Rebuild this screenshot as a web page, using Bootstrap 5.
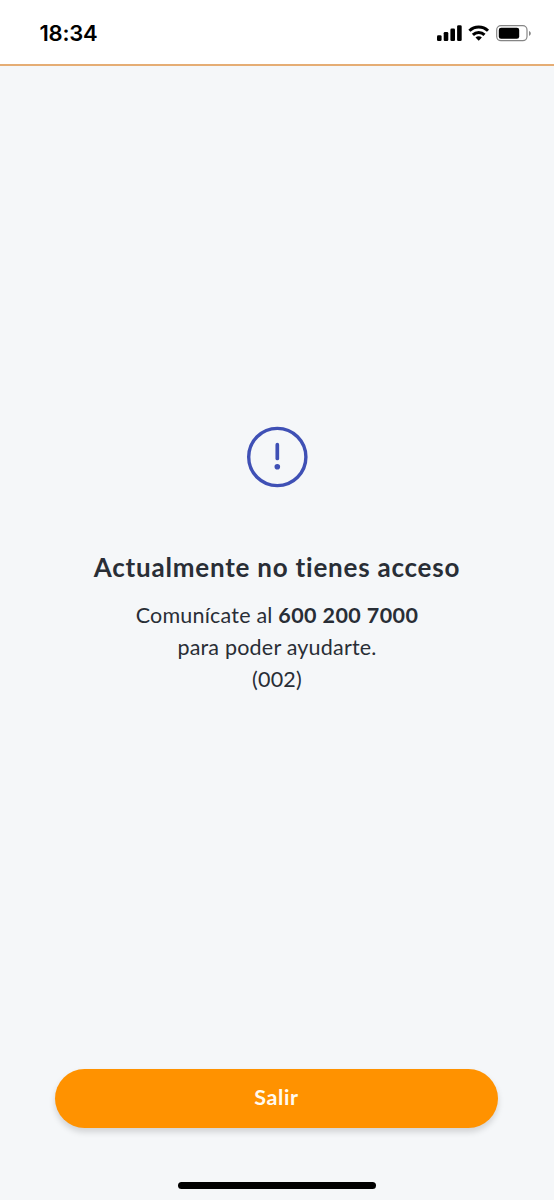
<!DOCTYPE html>
<html lang="es">
<head>
<meta charset="utf-8">
<meta name="viewport" content="width=device-width, initial-scale=1">
<title>Sin acceso</title>
<link href="https://cdn.jsdelivr.net/npm/bootstrap@5.3.0/dist/css/bootstrap.min.css" rel="stylesheet">
<style>
  body { background: #f5f7f9; color: #292e36; font-family: Lato, "Noto Sans", sans-serif; }
  .status-bar { height: 66px; border-bottom: 2px solid #e5ad74; padding-left: 39.5px; padding-right: 22px; }
  .clock { font: 600 22px/30px Inter, sans-serif; color: #000; margin-top: 18px; letter-spacing: -.2px; }
  .status-icons { margin-top: 20px; }
  .alert-icon { margin-top: 357px; }
  .headline { font-size: 26px; font-weight: 700; line-height: 36px; margin: 58px 0 14px; letter-spacing: .78px; }
  .copy { font-size: 21.5px; line-height: 32px; }
  .copy span, .copy strong { white-space: pre; }
  .l1 { letter-spacing: .2px; }
  .phone { letter-spacing: .4px; }
  .l2 { letter-spacing: .2px; }
  .l3 { letter-spacing: .2px; }
  .actions { padding: 0 56px 11px 55px; }
  .btn-exit { --bs-btn-bg: #ff9200; --bs-btn-color: #fffaf0; --bs-btn-hover-bg: #ef8800; --bs-btn-hover-color: #fff;
    height: 59px; font-size: 21.5px; font-weight: 700; border: 0; letter-spacing: .6px; box-shadow: 0 4px 6px rgba(0,0,0,.15); padding: 0 0 2px; }
  .home-bar { width: 198px; height: 7px; background: #000; margin: 54px auto 0; }
</style>
</head>
<body>
<div class="vh-100 d-flex flex-column overflow-hidden">
  <header class="status-bar bg-white d-flex justify-content-between align-items-start flex-shrink-0">
    <div class="clock">18:34</div>
    <svg class="status-icons" width="96" height="26" viewBox="436 20 96 26" aria-hidden="true">
      <rect x="437" y="35.2" width="4.6" height="5.8" rx="1.3"/>
      <rect x="443.7" y="32" width="4.6" height="9" rx="1.3"/>
      <rect x="450.4" y="28.6" width="4.6" height="12.4" rx="1.3"/>
      <rect x="457.1" y="25.2" width="4.6" height="15.8" rx="1.3"/>
      <g fill="none" stroke="#000" stroke-width="3">
        <path d="M469.4 30.7a13.3 13.3 0 0 1 18.6 0"/>
        <path d="M472.9 34.9a8.2 8.2 0 0 1 11.6 0"/>
      </g>
      <path d="M475.5 37.5a4.6 4.6 0 0 1 6.4 0l-3.2 3.3z"/>
      <rect x="496.7" y="25.7" width="30.3" height="15" rx="4.2" fill="none" stroke="#858585" stroke-width="1.2"/>
      <rect x="498.8" y="27.7" width="20.4" height="11" rx="2.3"/>
      <path d="M529 31c2.4.8 2.4 4 0 4.8z" fill="#858585"/>
    </svg>
  </header>
  <main class="flex-grow-1 d-flex flex-column align-items-center text-center">
    <svg class="alert-icon flex-shrink-0" width="68" height="68" viewBox="0 0 68 68" fill="none" stroke="#3f50b5" aria-hidden="true">
      <circle cx="34.3" cy="34" r="28.6" stroke-width="3.4"/>
      <path d="M34.3 21.7v13.8" stroke-width="3.7" stroke-linecap="round"/>
      <circle cx="34.3" cy="43.7" r="2.8" fill="#3f50b5" stroke="none"/>
    </svg>
    <h1 class="headline">Actualmente no tienes acceso</h1>
    <p class="copy mb-0"><span class="l1">Comunícate al </span><strong class="phone">600 200 7000</strong><br><span class="l2">para poder ayudarte.</span><br><span class="l3">(002)</span></p>
  </main>
  <footer class="actions flex-shrink-0">
    <button type="button" class="btn btn-exit w-100 rounded-pill d-block">Salir</button>
    <div class="home-bar rounded-pill"></div>
  </footer>
</div>
<script src="https://cdn.jsdelivr.net/npm/bootstrap@5.3.0/dist/js/bootstrap.bundle.min.js"></script>
</body>
</html>
